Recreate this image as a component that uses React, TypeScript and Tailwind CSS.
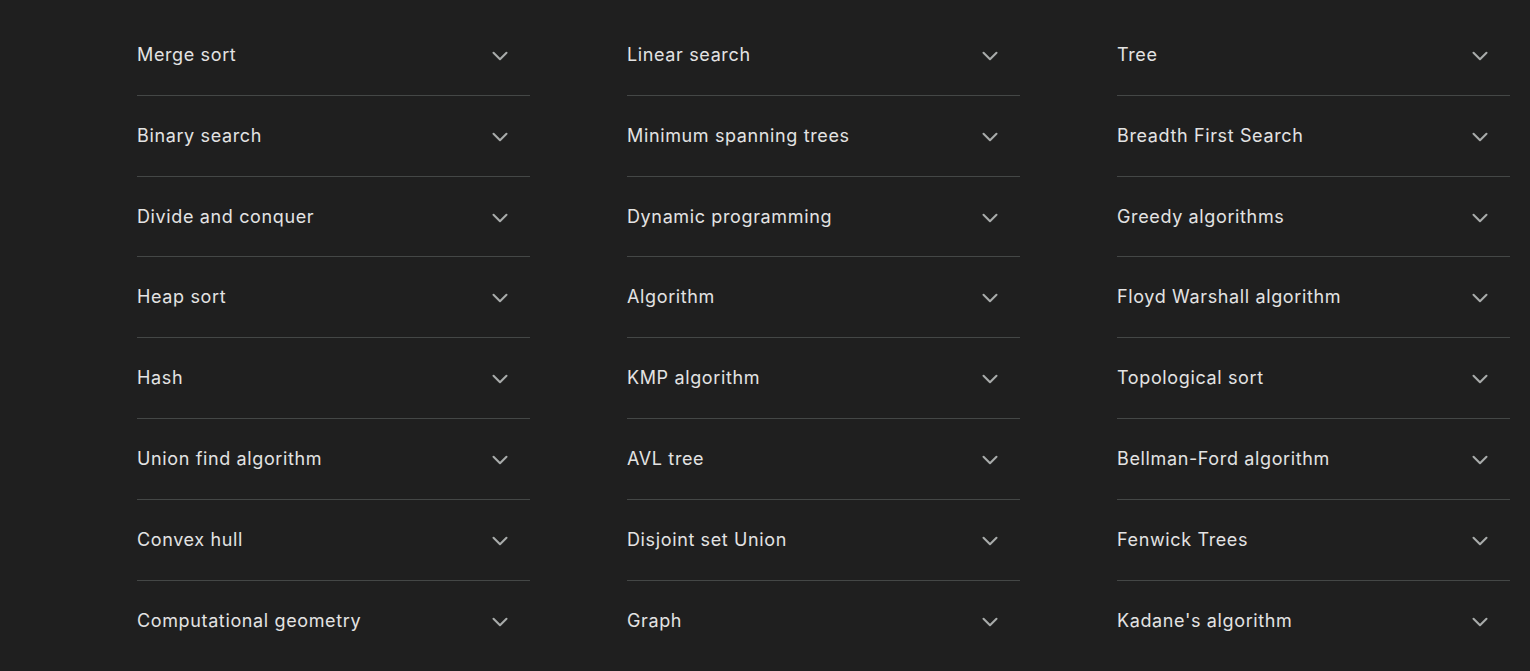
import { ChevronDown } from 'lucide-react'

const COLUMNS: string[][] = [
  [
    'Merge sort',
    'Binary search',
    'Divide and conquer',
    'Heap sort',
    'Hash',
    'Union find algorithm',
    'Convex hull',
    'Computational geometry',
  ],
  [
    'Linear search',
    'Minimum spanning trees',
    'Dynamic programming',
    'Algorithm',
    'KMP algorithm',
    'AVL tree',
    'Disjoint set Union',
    'Graph',
  ],
  [
    'Tree',
    'Breadth First Search',
    'Greedy algorithms',
    'Floyd Warshall algorithm',
    'Topological sort',
    'Bellman-Ford algorithm',
    'Fenwick Trees',
    "Kadane's algorithm",
  ],
]

function Item({ label, last }: { label: string; last: boolean }) {
  return (
    <button
      type="button"
      className={
        'flex h-[80.83px] w-full items-center justify-between text-left ' +
        (last ? '' : 'border-b border-[#444746]')
      }
    >
      <span className="text-[18px] leading-6 tracking-[0.035em] text-[#e3e3e3]">{label}</span>
      <ChevronDown className="mr-[17px] mt-[2px] h-[26px] w-[26px] text-[#a8abaa]" strokeWidth={1.9} />
    </button>
  )
}

export default function App() {
  return (
    <div
      className="min-h-[671px] bg-[#1f1f1f] pt-[15px] pl-[137px] pr-[20px]"
      style={{ fontFamily: 'Inter, "Noto Sans", sans-serif' }}
    >
      <div className="grid grid-cols-3 gap-x-[97px]">
        {COLUMNS.map((col, i) => (
          <div key={i} className="flex flex-col">
            {col.map((label, j) => (
              <Item key={label} label={label} last={j === col.length - 1} />
            ))}
          </div>
        ))}
      </div>
    </div>
  )
}
